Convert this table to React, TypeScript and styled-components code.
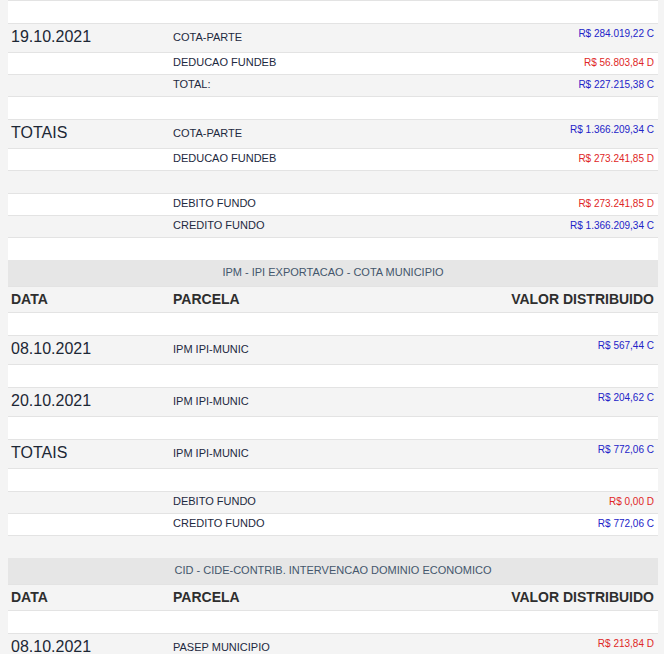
import styled, { createGlobalStyle } from 'styled-components';

const GlobalStyle = createGlobalStyle`
  html, body {
    margin: 0;
    padding: 0;
    background: #f4f4f4;
  }
  body {
    font-family: "Liberation Sans", Arial, sans-serif;
  }
`;

type Size = 'tall' | 'normal' | 'empty';

type Line = {
  size: Size;
  date?: string;
  label?: string;
  value?: string;
  debit?: boolean;
};

type Section = {
  title?: string;
  lines: Line[];
};

const empty: Line = { size: 'empty' };

const sections: Section[] = [
  {
    lines: [
      empty,
      { size: 'tall', date: '19.10.2021', label: 'COTA-PARTE', value: 'R$ 284.019,22 C' },
      { size: 'normal', label: 'DEDUCAO FUNDEB', value: 'R$ 56.803,84 D', debit: true },
      { size: 'normal', label: 'TOTAL:', value: 'R$ 227.215,38 C' },
      empty,
      { size: 'tall', date: 'TOTAIS', label: 'COTA-PARTE', value: 'R$ 1.366.209,34 C' },
      { size: 'normal', label: 'DEDUCAO FUNDEB', value: 'R$ 273.241,85 D', debit: true },
      empty,
      { size: 'normal', label: 'DEBITO FUNDO', value: 'R$ 273.241,85 D', debit: true },
      { size: 'normal', label: 'CREDITO FUNDO', value: 'R$ 1.366.209,34 C' },
      empty,
    ],
  },
  {
    title: 'IPM - IPI EXPORTACAO - COTA MUNICIPIO',
    lines: [
      empty,
      { size: 'tall', date: '08.10.2021', label: 'IPM IPI-MUNIC', value: 'R$ 567,44 C' },
      empty,
      { size: 'tall', date: '20.10.2021', label: 'IPM IPI-MUNIC', value: 'R$ 204,62 C' },
      empty,
      { size: 'tall', date: 'TOTAIS', label: 'IPM IPI-MUNIC', value: 'R$ 772,06 C' },
      empty,
      { size: 'normal', label: 'DEBITO FUNDO', value: 'R$ 0,00 D', debit: true },
      { size: 'normal', label: 'CREDITO FUNDO', value: 'R$ 772,06 C' },
      empty,
    ],
  },
  {
    title: 'CID - CIDE-CONTRIB. INTERVENCAO DOMINIO ECONOMICO',
    lines: [
      empty,
      { size: 'tall', date: '08.10.2021', label: 'PASEP MUNICIPIO', value: 'R$ 213,84 D', debit: true },
      empty,
    ],
  },
];

export default function App() {
  return (
    <>
      <GlobalStyle />
      <Page>
        {sections.map((section, si) => (
          <Table key={si}>
            {section.title && <SectionTitle>{section.title}</SectionTitle>}
            {section.title && (
              <Row $size="head" $shaded>
                <HeadCell>DATA</HeadCell>
                <HeadCell>PARCELA</HeadCell>
                <HeadCell>VALOR DISTRIBUIDO</HeadCell>
              </Row>
            )}
            {section.lines.map((line, li) => (
              <Row key={li} $size={line.size} $shaded={li % 2 === 1}>
                <DateCell>{line.date}</DateCell>
                <Label>{line.label}</Label>
                <Value $debit={line.debit}>{line.value}</Value>
              </Row>
            ))}
          </Table>
        ))}
      </Page>
    </>
  );
}

const Page = styled.div`
  padding: 0 6px 0 8px;
`;

const Table = styled.div`
  display: flex;
  flex-direction: column;
`;

const SectionTitle = styled.div`
  height: 24px;
  padding-bottom: 2px;
  display: flex;
  align-items: center;
  justify-content: center;
  background: #e6e6e6;
  color: #44566c;
  font-size: 11px;
  line-height: 13px;
`;

const heights = {
  head: 25,
  tall: 28,
  normal: 21,
  empty: 22,
};

const Row = styled.div<{ $size: Size | 'head'; $shaded?: boolean }>`
  display: grid;
  grid-template-columns: 162px 1fr auto;
  height: ${({ $size }) => heights[$size]}px;
  padding: 0 4px 0 3px;
  border-top: 1px solid #e3e3e3;
  background: ${({ $shaded }) => ($shaded ? '#f4f4f4' : '#ffffff')};
`;

const DateCell = styled.div`
  align-self: center;
  margin-bottom: 2px;
  font-size: 16px;
  line-height: 18px;
  color: #1c2735;
`;

const Label = styled.div`
  align-self: center;
  margin-bottom: 2px;
  font-size: 11px;
  line-height: 13px;
  color: #1d2940;
`;

const Value = styled.div<{ $debit?: boolean }>`
  align-self: start;
  padding-top: 4px;
  font-size: 10px;
  line-height: 12px;
  text-align: right;
  color: ${({ $debit }) => ($debit ? '#e02626' : '#2323c8')};
`;

const HeadCell = styled.div`
  align-self: center;
  margin-bottom: 2px;
  font-size: 14px;
  line-height: 16px;
  font-weight: 700;
  color: #2e2e2e;

  &:last-child {
    text-align: right;
  }
`;
